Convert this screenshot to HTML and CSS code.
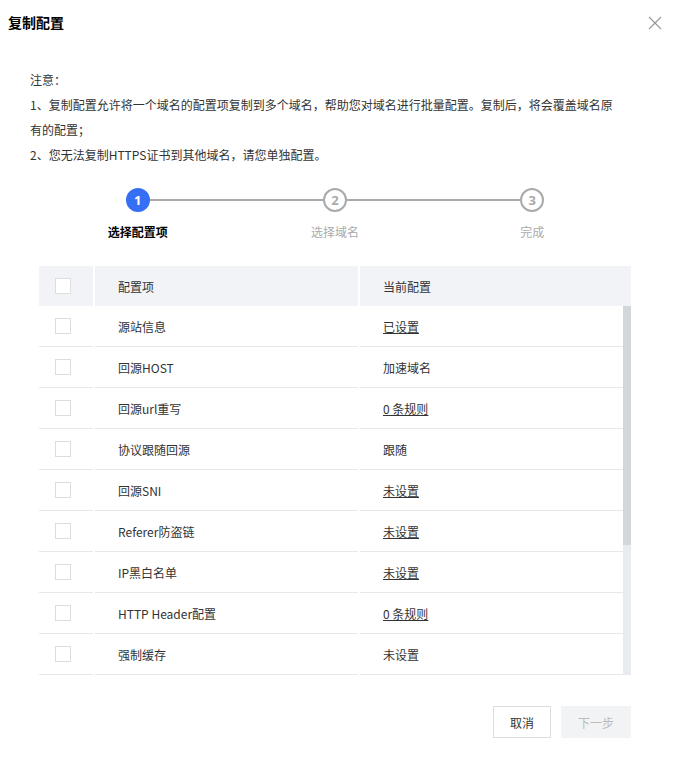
FILE: index.html
```html
<!DOCTYPE html>
<html lang="zh-CN">

<head>
    <meta charset="UTF-8">
    <meta name="viewport" content="width=device-width, initial-scale=1.0">
    <title>复制配置</title>
    <link rel="stylesheet" href="styles.css">
</head>

<body>
    <div class="dialog">
        <div class="dialog-header">
            <h3>复制配置</h3>
            <span class="close">
                <svg width="14" height="14" viewBox="0 0 14 14">
                    <path d="M1 1 L13 13 M13 1 L1 13" stroke="#999" stroke-width="1.2" fill="none" />
                </svg>
            </span>
        </div>

        <div class="notice">
            <p>注意：</p>
            <p>1、复制配置允许将一个域名的配置项复制到多个域名，帮助您对域名进行批量配置。复制后，将会覆盖域名原有的配置；</p>
            <p>2、您无法复制HTTPS证书到其他域名，请您单独配置。</p>
        </div>

        <div class="steps">
            <div class="step active">
                <span class="step-num">1</span>
                <span class="step-label">选择配置项</span>
            </div>
            <div class="step">
                <span class="step-num">2</span>
                <span class="step-label">选择域名</span>
            </div>
            <div class="step last">
                <span class="step-num">3</span>
                <span class="step-label">完成</span>
            </div>
        </div>

        <div class="table">
            <div class="table-head">
                <div class="cell check"><span class="checkbox"></span></div>
                <div class="cell">配置项</div>
                <div class="cell">当前配置</div>
            </div>
            <div class="table-body">
                <div class="table-rows" id="tableRows"></div>
                <div class="scrollbar"><div class="scrollbar-thumb"></div></div>
            </div>
        </div>

        <div class="dialog-footer">
            <button class="btn">取消</button>
            <button class="btn disabled">下一步</button>
        </div>
    </div>

    <script>
        const rows = [
            { name: '源站信息', value: '已设置', link: true },
            { name: '回源HOST', value: '加速域名' },
            { name: '回源url重写', value: '0 条规则', link: true },
            { name: '协议跟随回源', value: '跟随' },
            { name: '回源SNI', value: '未设置', link: true },
            { name: 'Referer防盗链', value: '未设置', link: true },
            { name: 'IP黑白名单', value: '未设置', link: true },
            { name: 'HTTP Header配置', value: '0 条规则', link: true },
            { name: '强制缓存', value: '未设置' }
        ];

        document.getElementById('tableRows').innerHTML = rows.map(row => `
            <div class="table-row">
                <div class="cell check"><span class="checkbox"></span></div>
                <div class="cell">${row.name}</div>
                <div class="cell">${row.link ? `<a href="#">${row.value}</a>` : row.value}</div>
            </div>
        `).join('');
    </script>
</body>

</html>
```

FILE: styles.css
```css
:root {
    --primary-color: #366ef4;
    --text-color: #333333;
    --muted-color: #aaaaaa;
    --border-color: #e8e8e8;
    --head-background: #f2f3f7;
}

body {
    margin: 0;
    font-family: "Noto Sans CJK SC", "Microsoft YaHei", sans-serif;
    font-size: 12px;
    color: var(--text-color);
    background-color: #ffffff;
}

.dialog {
    width: 675px;
    height: 772px;
    box-sizing: border-box;
}

.dialog-header {
    display: flex;
    justify-content: space-between;
    align-items: center;
    padding: 11px 13px 0 8px;
    height: 22px;
}

.dialog-header h3 {
    margin: 0;
    font-size: 14px;
    font-weight: bold;
    color: #000000;
}

.close {
    display: flex;
    cursor: pointer;
    margin-top: 2px;
}

.notice {
    padding: 34px 55px 0 30px;
}

.notice p {
    margin: 0;
    line-height: 25px;
}

.steps {
    display: grid;
    grid-template-columns: repeat(3, 1fr);
    margin: 21px 44px 0 39px;
}

.step {
    position: relative;
    display: flex;
    flex-direction: column;
    align-items: center;
}

.step::after {
    content: '';
    position: absolute;
    top: 11px;
    left: calc(50% + 12px);
    width: calc(100% - 24px);
    height: 2px;
    background-color: var(--muted-color);
}

.step.last::after {
    display: none;
}

.step-num {
    width: 24px;
    height: 24px;
    box-sizing: border-box;
    border: 2px solid var(--muted-color);
    border-radius: 50%;
    color: var(--muted-color);
    font-family: "Open Sans", Arial, sans-serif;
    font-weight: bold;
    font-size: 13px;
    line-height: 20px;
    text-align: center;
}

.step.active .step-num {
    background-color: var(--primary-color);
    border-color: var(--primary-color);
    color: #ffffff;
}

.step-label {
    margin-top: 12px;
    line-height: 16px;
    color: var(--muted-color);
}

.step.active .step-label {
    color: #000000;
    font-weight: bold;
}

.table {
    margin: 26px 44px 0 39px;
}

.table-head,
.table-row {
    display: grid;
    grid-template-columns: 54px 263px 1fr;
    column-gap: 2px;
}

.table-head {
    background-color: var(--head-background);
    height: 40px;
}

.table-head .cell {
    border-left: 2px solid #ffffff;
    margin-left: -2px;
}

.table-head .cell:first-child {
    border-left: none;
    margin-left: 0;
}

.table-body {
    display: flex;
    height: 369px;
    overflow: hidden;
}

.table-rows {
    flex: 1;
}

.scrollbar {
    width: 8px;
    background-color: #e8ebef;
}

.scrollbar-thumb {
    height: 239px;
    background-color: #d3d6da;
}

.table-row {
    height: 41px;
}

.table-row .cell {
    border-bottom: 1px solid var(--border-color);
}

.cell {
    display: flex;
    align-items: center;
    padding-left: 23px;
    box-sizing: border-box;
}

.cell.check {
    padding-left: 16px;
}

.checkbox {
    width: 16px;
    height: 16px;
    box-sizing: border-box;
    border: 1px solid #dddddd;
    background-color: #ffffff;
}

.cell a {
    color: var(--text-color);
    text-decoration: underline;
}

.dialog-footer {
    display: flex;
    justify-content: flex-end;
    gap: 10px;
    padding: 31px 44px 0 0;
}

.btn {
    width: 58px;
    height: 32px;
    padding: 0;
    font-family: inherit;
    font-size: 12px;
    color: var(--text-color);
    background-color: #ffffff;
    border: 1px solid #dddddd;
    cursor: pointer;
}

.btn.disabled {
    width: 70px;
    color: #bbbbbb;
    background-color: #f2f3f5;
    border-color: #f2f3f5;
    cursor: not-allowed;
}
```
